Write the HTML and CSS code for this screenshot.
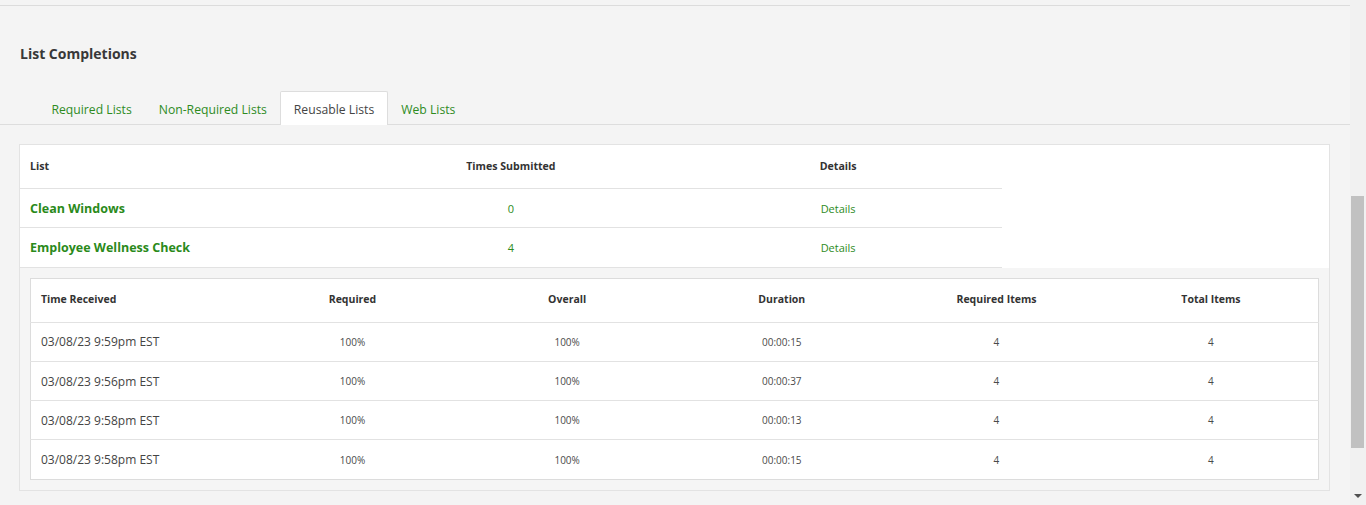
FILE: index.html
```html
<!DOCTYPE html>
<html>
<head>
<meta charset="utf-8">
<link rel="stylesheet" href="styles.css">
</head>
<body>
<div class="frame">
  <div class="main">
    <div class="topline"></div>
    <h1 class="title">List Completions</h1>
    <div class="tabs">
      <a class="tab">Required Lists</a>
      <a class="tab">Non-Required Lists</a>
      <a class="tab active">Reusable Lists</a>
      <a class="tab">Web Lists</a>
    </div>
    <div class="card">
      <table class="lists">
        <thead>
          <tr><th class="left">List</th><th>Times Submitted</th><th>Details</th></tr>
        </thead>
        <tbody>
          <tr><td class="left name">Clean Windows</td><td class="link">0</td><td class="link">Details</td></tr>
          <tr><td class="left name">Employee Wellness Check</td><td class="link">4</td><td class="link">Details</td></tr>
        </tbody>
      </table>
      <div class="detail">
        <table class="subs">
          <thead>
            <tr><th class="left">Time Received</th><th>Required</th><th>Overall</th><th>Duration</th><th>Required Items</th><th>Total Items</th></tr>
          </thead>
          <tbody>
            <tr><td class="left time">03/08/23 9:59pm EST</td><td>100%</td><td>100%</td><td>00:00:15</td><td>4</td><td>4</td></tr>
            <tr><td class="left time">03/08/23 9:56pm EST</td><td>100%</td><td>100%</td><td>00:00:37</td><td>4</td><td>4</td></tr>
            <tr><td class="left time">03/08/23 9:58pm EST</td><td>100%</td><td>100%</td><td>00:00:13</td><td>4</td><td>4</td></tr>
            <tr><td class="left time">03/08/23 9:58pm EST</td><td>100%</td><td>100%</td><td>00:00:15</td><td>4</td><td>4</td></tr>
          </tbody>
        </table>
      </div>
    </div>
  </div>
  <div class="scrollbar">
    <div class="track"><div class="thumb"></div></div>
    <div class="arrow"></div>
  </div>
</div>
</body>
</html>
```
FILE: styles.css
```css
html, body {
  margin: 0;
  padding: 0;
  height: 505px;
  overflow: hidden;
}
body {
  background: #f4f4f4;
  font-family: "Open Sans", "Noto Sans", sans-serif;
  color: #333;
}
.frame {
  display: flex;
  height: 505px;
}
.main {
  flex: 1;
  min-width: 0;
  padding-top: 5px;
}
.topline {
  height: 1px;
  background: #dcdcdc;
}
.title {
  margin: 38px 0 0 20px;
  font-size: 14px;
  font-weight: 700;
  line-height: 19px;
  color: #383838;
}
.tabs {
  display: flex;
  margin-top: 28px;
  padding-left: 38px;
  border-bottom: 1px solid #dddddd;
}
.tab {
  display: block;
  padding: 0 12.5px;
  height: 32px;
  line-height: 36px;
  font-size: 12.2px;
  color: #2e8b1e;
  border: 1px solid transparent;
  border-bottom: none;
  margin-bottom: -1px;
  border-radius: 2px 2px 0 0;
}
.tab.active {
  background: #fff;
  border-color: #dddddd;
  color: #444;
  height: 33px;
}
.card {
  margin: 19px 20px 0 19px;
  background: #fff;
  border: 1px solid #e3e3e3;
}
table {
  border-collapse: collapse;
  table-layout: fixed;
}
.lists {
  width: 75%;
}
.lists th {
  height: 42px;
  font-size: 10.6px;
  font-weight: 700;
  color: #333;
  text-align: center;
  padding: 0 10px 1px;
}
.lists td {
  height: 38.3px;
  border-top: 1px solid #e2e2e2;
  font-size: 11px;
  text-align: center;
  padding: 0 10px;
}
.lists .left {
  text-align: left;
}
.lists .name {
  font-size: 12.5px;
  font-weight: 700;
  color: #2a8a1a;
}
.lists .link {
  color: #2e8b1e;
}
.lists tbody tr:last-child td {
  border-bottom: 1px solid #e2e2e2;
}
.detail {
  background: #f5f5f5;
  padding: 10px;
}
.subs {
  width: 100%;
  background: #fff;
  border: 1px solid #dcdcdc;
}
.subs th {
  height: 41px;
  font-size: 10.5px;
  font-weight: 700;
  color: #333;
  text-align: center;
  padding: 0 10px 2px;
}
.subs td {
  height: 38.3px;
  border-top: 1px solid #e2e2e2;
  font-size: 10px;
  color: #4a4a4a;
  text-align: center;
  padding: 0 10px;
}
.subs .left {
  text-align: left;
}
.subs .time {
  font-size: 12px;
  color: #444;
}
.scrollbar {
  width: 16px;
  flex: none;
  background: #f1f1f1;
  display: flex;
  flex-direction: column;
}
.track {
  flex: 1;
  padding: 196px 2px 0 1px;
}
.thumb {
  height: 252px;
  background: #c1c1c1;
}
.arrow {
  height: 13px;
  display: flex;
  justify-content: center;
  padding-top: 2px;
  box-sizing: border-box;
}
.arrow::before {
  content: "";
  width: 0;
  height: 0;
  border-left: 4px solid transparent;
  border-right: 4px solid transparent;
  border-top: 4px solid #505050;
}
```
